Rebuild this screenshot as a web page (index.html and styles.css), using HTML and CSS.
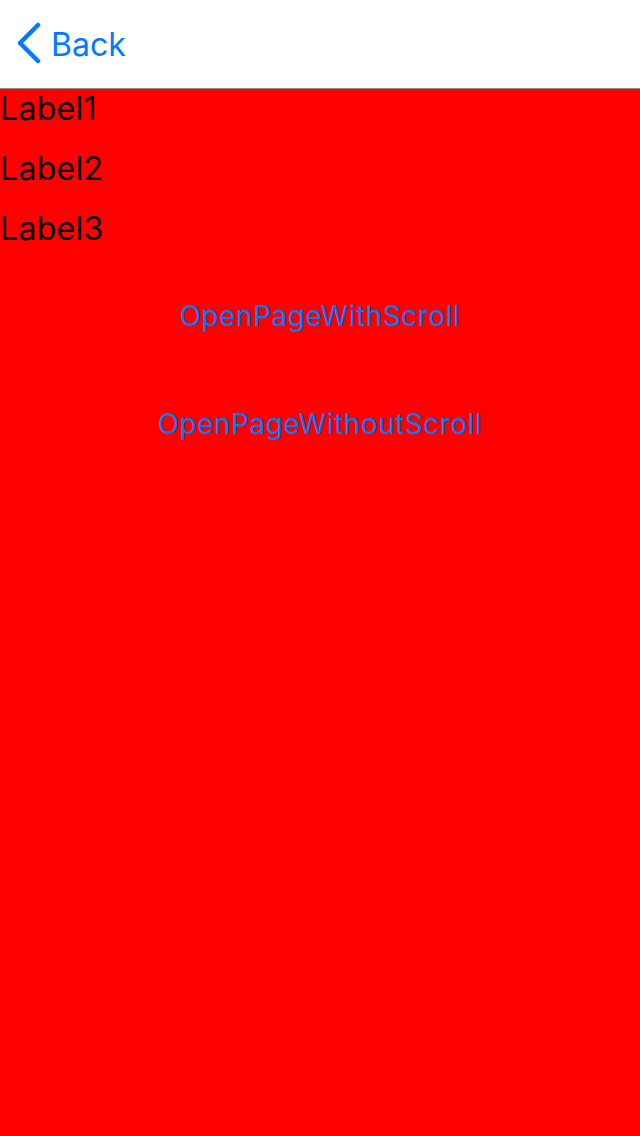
FILE: index.html
```html
<!DOCTYPE html>
<html lang="en">
<head>
    <meta charset="UTF-8">
    <meta name="viewport" content="width=device-width, initial-scale=1.0">
    <title>Labels</title>
    <link rel="stylesheet" href="styles.css">
</head>
<body>
    <header class="navbar">
        <a class="back" href="#">
            <svg class="chevron" width="30" height="44" viewBox="0 0 30 44">
                <polyline points="22,3 4,21 22,39" fill="none" stroke="#007aff" stroke-width="4.5" stroke-linecap="round" stroke-linejoin="round"/>
            </svg>
            <span>Back</span>
        </a>
    </header>
    <main class="page">
        <div class="labels">
            <div class="label">Label1</div>
            <div class="label">Label2</div>
            <div class="label">Label3</div>
        </div>
        <div class="actions">
            <button class="link">OpenPageWithScroll</button>
            <button class="link">OpenPageWithoutScroll</button>
        </div>
    </main>
</body>
</html>
```
FILE: styles.css
```css
html, body { margin: 0; height: 100%; }
body {
    font-family: "Inter", "Liberation Sans", sans-serif;
    display: flex;
    flex-direction: column;
}
.navbar {
    height: 88px;
    background: #fff;
    border-bottom: 1px solid #8c8c8c;
    display: flex;
    align-items: center;
    flex-shrink: 0;
}
.back {
    display: flex;
    align-items: center;
    gap: 5px;
    padding-left: 16px;
    color: #007aff;
    text-decoration: none;
    font-size: 32px;
}
.chevron { display: block; }
.page {
    flex: 1;
    background: #ff0000;
}
.labels {
    display: flex;
    flex-direction: column;
    gap: 20px;
}
.label {
    font-size: 32px;
    letter-spacing: 0.3px;
    line-height: 40px;
    color: #000;
}
.actions {
    display: flex;
    flex-direction: column;
    align-items: center;
    gap: 54px;
    margin-top: 40px;
}
.link {
    background: none;
    border: none;
    padding: 0;
    height: 54px;
    font-family: inherit;
    font-size: 28px;
    letter-spacing: 0.5px;
    color: #007aff;
    cursor: pointer;
}
```
